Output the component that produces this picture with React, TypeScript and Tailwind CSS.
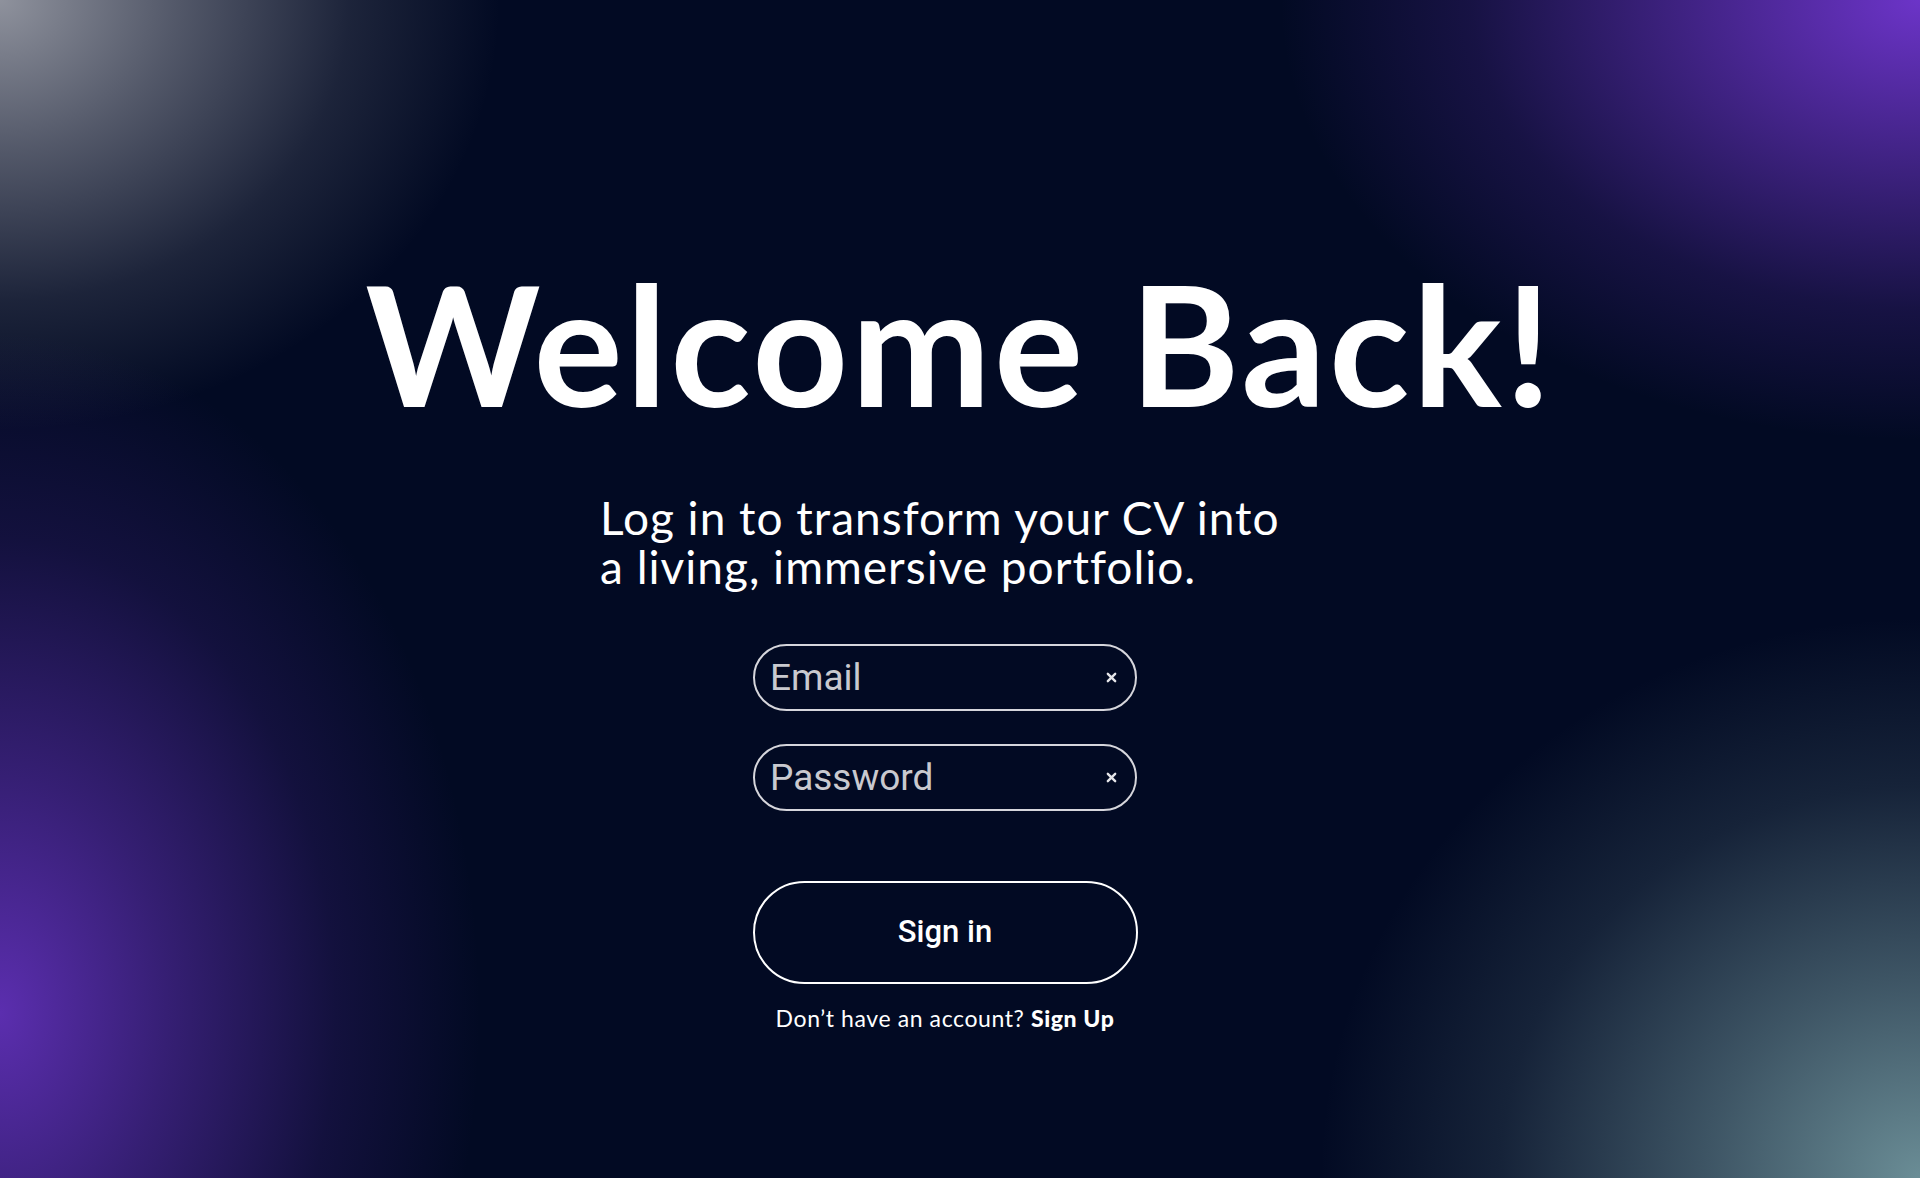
import React from 'react'

function ClearButton() {
  return (
    <button
      type="button"
      className="flex h-[14px] w-[14px] items-center justify-center text-[#e6e6ea]"
      aria-label="clear"
    >
      <svg viewBox="0 0 12 12" className="h-[11px] w-[11px]">
        <path d="M2 2 L10 10 M10 2 L2 10" stroke="currentColor" strokeWidth="2.6" strokeLinecap="round" />
      </svg>
    </button>
  )
}

function Field({placeholder, type}: {placeholder: string; type: string}) {
  return (
    <div className="flex h-[67px] w-[384px] items-center rounded-full border-[2.5px] border-[#d6d6dc] pl-[15px] pr-[17px]">
      <input
        type={type}
        placeholder={placeholder}
        className="min-w-0 flex-1 bg-transparent font-['Roboto',sans-serif] text-[37px] text-white outline-none placeholder:text-[#c9c9cf]"
      />
      <ClearButton />
    </div>
  )
}

export default function App() {
  return (
    <div className="relative min-h-[1178px] w-full overflow-hidden bg-[#020a23] font-['Lato',sans-serif] text-white">
      {/* corner glows */}
      <div className="pointer-events-none absolute inset-0 bg-[radial-gradient(ellipse_500px_430px_at_0%_0%,rgba(150,153,163,0.95)_0%,rgba(150,153,163,0.55)_35%,rgba(150,153,163,0.18)_70%,rgba(150,153,163,0)_100%)]" />
      <div className="pointer-events-none absolute inset-0 bg-[radial-gradient(ellipse_640px_440px_at_100%_0%,rgba(108,52,200,1)_0%,rgba(108,52,200,0.6)_35%,rgba(108,52,200,0.2)_70%,rgba(108,52,200,0)_100%)]" />
      <div className="pointer-events-none absolute inset-0 bg-[radial-gradient(ellipse_480px_680px_at_0%_86%,rgba(96,48,182,0.95)_0%,rgba(96,48,182,0.55)_35%,rgba(96,48,182,0.18)_70%,rgba(96,48,182,0)_100%)]" />
      <div className="pointer-events-none absolute inset-0 bg-[radial-gradient(ellipse_600px_560px_at_100%_100%,rgba(112,148,156,0.95)_0%,rgba(112,148,156,0.55)_35%,rgba(112,148,156,0.18)_70%,rgba(112,148,156,0)_100%)]" />

      <div className="relative flex flex-col items-center pt-[259px]">
        <h1 className="text-[167px] font-bold leading-none tracking-[3px] text-white">Welcome Back!</h1>

        <div className="flex w-full justify-center pr-[30px]">
          <div className="flex w-[690px] flex-col items-center">
            <p className="mt-[67px] w-full text-[46px] leading-[49px] tracking-[1px] text-white">
              Log in to transform your CV into
              <br />
              a living, immersive portfolio.
            </p>

            <form className="mt-[53px] flex flex-col items-center" onSubmit={e => e.preventDefault()}>
              <Field placeholder="Email" type="email" />
              <div className="mt-[33px]">
                <Field placeholder="Password" type="password" />
              </div>
              <button
                type="submit"
                className="mt-[70px] h-[103px] w-[385px] rounded-full border-2 border-white font-['Roboto',sans-serif] text-[31px] font-medium text-white"
              >
                Sign in
              </button>
            </form>

            <p className="mt-[20px] text-[23px] leading-[28px] tracking-[0.6px] text-white">
              Don’t have an account? <a href="#" className="font-black">Sign Up</a>
            </p>
          </div>
        </div>
      </div>
    </div>
  )
}
